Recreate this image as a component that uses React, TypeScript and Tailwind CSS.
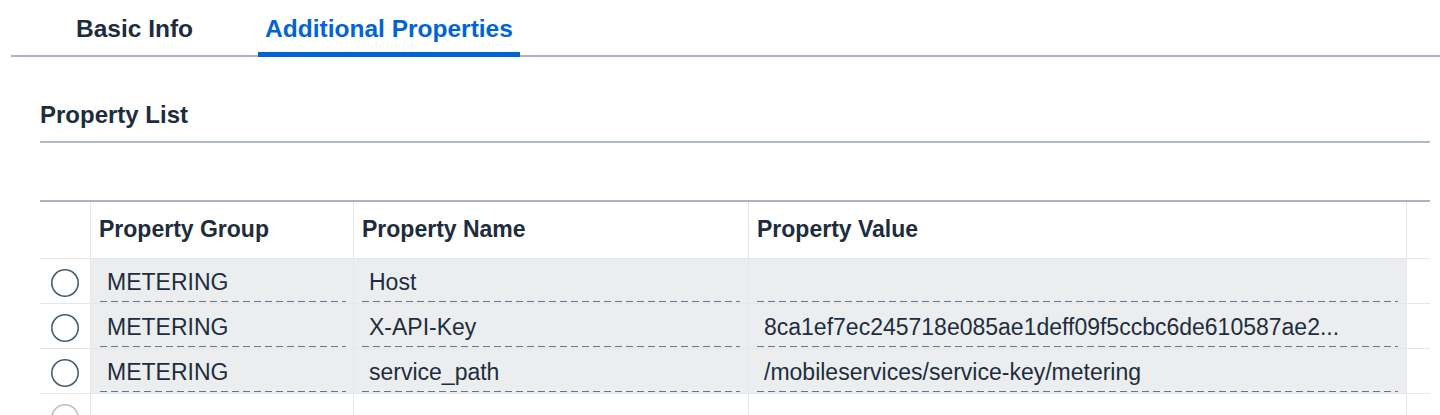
import React from 'react';

const rows = [
  { group: 'METERING', name: 'Host', value: '' },
  { group: 'METERING', name: 'X-API-Key', value: '8ca1ef7ec245718e085ae1deff09f5ccbc6de610587ae2...' },
  { group: 'METERING', name: 'service_path', value: '/mobileservices/service-key/metering' },
];

const cols = 'grid grid-cols-[51px_263px_395px_658px_23px]';

function Radio({ faded }: { faded?: boolean }) {
  return (
    <svg width="30" height="30" viewBox="0 0 30 30">
      <circle cx="15" cy="15" r="13.2" fill="white" stroke={faded ? '#b8c1ca' : '#475e75'} strokeWidth="1.6" />
    </svg>
  );
}

function Cell({ text, first }: { text: string; first?: boolean }) {
  return (
    <div className={`flex h-full flex-col justify-end border-r border-[#e5e7ea] bg-[#ebedef] pb-[1px] ${first ? 'pl-[9px] pr-[7px]' : 'px-[8px]'}`}>
      <div className="mb-[5px] truncate pl-[7px] text-[23px] leading-[28px]">{text}</div>
      <div className="h-px bg-[repeating-linear-gradient(90deg,#5f778f_0_7px,transparent_7px_11px)]" />
    </div>
  );
}

export default function App() {
  return (
    <div className="h-[415px] overflow-hidden bg-white font-['Liberation_Sans',Arial,sans-serif] text-[#1d2d3e]">
      <div className="ml-[11px] flex gap-[58px] pl-[58px] shadow-[inset_0_-2px_0_#aab4bf]">
        <div className="flex h-[57px] items-center px-[7px] pt-[2px] text-[24.5px] font-bold">Basic Info</div>
        <div className="flex h-[57px] items-center border-b-[5px] border-[#0064d9] px-[7px] pt-[7px] text-[24.5px] font-bold text-[#0064d9]">
          Additional Properties
        </div>
      </div>

      <section className="ml-[40px] w-[1390px]">
        <h2 className="border-b-2 border-[#b0bac5] pb-[10px] pt-[42px] text-[24px] font-bold leading-[32px]">Property List</h2>

        <div className="mt-[57px] border-t-2 border-[#a9b4bf]">
          <div className={`${cols} h-[57px] border-b border-[#e5e7ea]`}>
            <div className="border-r border-[#e5e7ea]" />
            <div className="flex items-center border-r border-[#e5e7ea] pb-[2px] pl-[8px] text-[23px] font-bold">Property Group</div>
            <div className="flex items-center border-r border-[#e5e7ea] pb-[2px] pl-[8px] text-[23px] font-bold">Property Name</div>
            <div className="flex items-center border-r border-[#e5e7ea] pb-[2px] pl-[8px] text-[23px] font-bold">Property Value</div>
            <div />
          </div>

          {rows.map((r) => (
            <div key={r.name} className={`${cols} h-[45px] border-b border-[#e5e7ea]`}>
              <div className="flex items-center justify-center border-r border-[#e5e7ea] pt-[3px] pr-[1px]">
                <Radio />
              </div>
              <Cell text={r.group} first />
              <Cell text={r.name} />
              <Cell text={r.value} />
              <div />
            </div>
          ))}

          <div className={`${cols} h-[45px]`}>
            <div className="flex items-center justify-center border-r border-[#e5e7ea] pt-[3px] pr-[1px]">
              <Radio faded />
            </div>
            <div className="border-r border-[#e5e7ea]" />
            <div className="border-r border-[#e5e7ea]" />
            <div className="border-r border-[#e5e7ea]" />
            <div />
          </div>
        </div>
      </section>
    </div>
  );
}
